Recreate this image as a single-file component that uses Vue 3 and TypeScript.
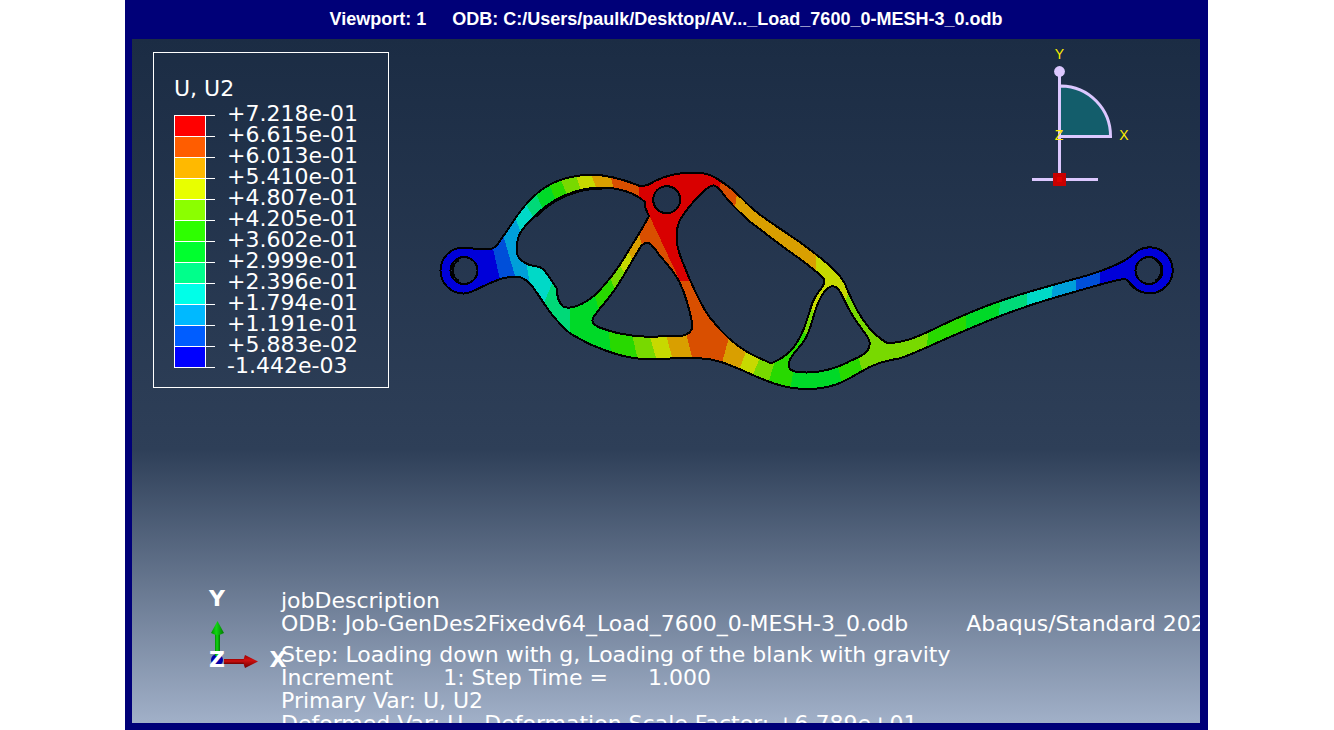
<script setup lang="ts">
interface Band { color: string; points: string }

const legendColors: string[] = [
  '#ff0000', '#ff5d00', '#ffb900', '#e8ff00', '#8bff00', '#2eff00',
  '#00ff2e', '#00ff8b', '#00ffe8', '#00b9ff', '#005dff', '#0000ff',
]

const legendValues: string[] = [
  '+7.218e-01', '+6.615e-01', '+6.013e-01', '+5.410e-01', '+4.807e-01',
  '+4.205e-01', '+3.602e-01', '+2.999e-01', '+2.396e-01', '+1.794e-01',
  '+1.191e-01', '+5.883e-02', '-1.442e-03',
]

function ring(cx: number, cy: number, r: number): string {
  return `M${cx - r} ${cy}a${r} ${r} 0 1 0 ${2 * r} 0a${r} ${r} 0 1 0 ${-2 * r} 0Z`
}

const body = `M463.500 247.500C474 247.500 480 251.500 492 248.500C499 246 500 239 507 231
  C527 198 548 175 592 174.800C610 174.800 625 180 640 186C647 186 650 184 655 181
  C665 176 680 172.500 693 172.500C708 172.500 715 177 722 182C735 190 740 197 750 206.500
  C765 220 780 228 800 242.300C812 251 822 259 829 265C838 273 843 280 845 284
  C848 292 850 296 857 310C864 322 872 334 887 343C905 343 920 336 940 326
  C990 302 1020 294 1077 278.300C1100 272 1122 264 1133 254.500A23 23 0 1 1 1135 288
  C1131 285 1129 279 1124 279C1110 281 1085 289 1050 299C1010 311 985 322 947 338.300
  C930 346 915 353 900 358.300C885 361 875 363 860 372.300C845 381 833 389 807 389
  C780 389 760 378 740 369.300C725 363 715 359 700 358.300C680 357.500 670 358.300 653 359.500
  C630 359 615 355 590 344.300C580 339 572 335 569 332.500C555 320 548 310 543 302
  C535 290 530 281 521 277.500C505 275 495 281 480 287.700C473 291 470 293.500 463.500 293.500
  A23 23 0 0 1 463.500 247.500Z`

const voids: string[] = [
  `M518 238C516 247 516 254 519 258C525 265 533 266 540 267C547 271 549 278 556.500 288
   C557 297 559 303 563 306.500C570 310 583 305 595 295C607 283 618 269 627 253.300
   C633 243 640 233 649 216C648 213 644 209 645 202C635 193 620 188 602 187.500
   C575 187.500 550 200 535 216C525 225 520 232 518 238Z`,
  `M647.500 242.700C642 242.700 640 248 636.700 253.300C628 268 620 283 612 293.500
   C605 303 599 309 593.500 317C591 322 593 324 598 327C612 332 625 336 647 336.700
   C660 336.700 672 336.200 683 335.500C690 334 693 330 692.300 323.300C690 312 687 298 680 283.300
   C677 276 668 265 661 257C655 250 652 243 647.500 242.700Z`,
  `M713.500 185.300C708 186 704 191 700 195C693 202 688 207 682 216.700C676 225 675 240 679 252
   C681 259 686 270 690 280C698 297 703 310 712 320C722 333 732 343 747 351.700
   C756 357 764 360 771 363.300C779 360 785 357 791 350.500C799 342 803 332 807 320
   C811 307 813 298 819 291.500C822 287 826 284 824 279C820 274 812 268 800 259
   C780 245 765 233 750 221.700C738 211 735 208 728 200C722 193 719 186 713.500 185.300Z`,
  `M833 286C825 287 819 300 816 308.300C812 320 811 330 804 341C799 349 792 353 789.500 361
   C787 368 791 371 797 372C815 374 830 371 847 362.700C855 358 863 357 868 350
   C872 342 868 337 864 332C858 324 850 312 845 301.700C841 294 839 287 833 286Z`,
  ring(464, 270.5, 13.5),
  ring(666.7, 199.7, 13.5),
  ring(1149, 270.5, 13.5),
]

const outline = [body, ...voids].join(' ')

const bands: Band[] = [
  { color: '#0000d9', points: '436,240 491,240 501,284 436,300' },
  { color: '#004fd9', points: '491,240 502,231 517,283 501,284' },
  { color: '#009fd9', points: '502,231 513,212 523,238 523,262 526,262 530,284 517,283' },
  { color: '#00d9c7', points: '513,212 523,238 535,220 524,201' },
  { color: '#00d978', points: '524,201 535,220 545,213 534,190' },
  { color: '#00d928', points: '534,190 545,213 558,204 547,181' },
  { color: '#28d900', points: '547,181 558,204 569,199 559,176' },
  { color: '#78d900', points: '559,176 569,199 583,196 574,170' },
  { color: '#c7d900', points: '574,170 583,196 599,196 589,168' },
  { color: '#d99f00', points: '589,168 599,196 616,196 608,168' },
  { color: '#d94f00', points: '608,168 616,196 640,202 637,170' },
  { color: '#00d9c7', points: '526,262 530,284 542,308 555,276 545,262' },
  { color: '#00d978', points: '555,276 542,308 560,335 570,338 570,300 560,285' },
  { color: '#00d928', points: '570,300 570,338 612,362 608,325 601,318 594,292' },
  { color: '#78d900', points: '607,272 618,295 629,280 617,261' },
  { color: '#c7d900', points: '617,261 629,280 634,265 626,245' },
  { color: '#d99f00', points: '626,245 634,265 643,248 638,231' },
  { color: '#78d900', points: '631,330 639,365 658,365 648,330' },
  { color: '#c7d900', points: '648,330 658,365 674,365 665,330' },
  { color: '#d99f00', points: '665,330 674,365 694,365 685,329' },
  { color: '#d94f00', points: '638,231 643,248 655,260 670,290 685,329 694,365 721,366 730,334 715,310 700,280 680,280 649,215 645,215' },
  { color: '#d99f00', points: '730,334 721,366 737,375 748,347' },
  { color: '#c7d900', points: '748,347 737,375 750,382 761,355' },
  { color: '#78d900', points: '761,355 750,382 767,388 776,357' },
  { color: '#d90000', points: '637,170 638,182 640,202 649,215 680,281 695,281 678,225 700,200 718,195 723,173 690,165' },
  { color: '#d94f00', points: '723,173 718,195 734,213 738,188' },
  { color: '#d99f00', points: '738,188 734,213 816,280 816,248' },
  { color: '#c7d900', points: '816,248 816,290 807,300 818,320 833,292 845,303 849,291 860,280' },
  { color: '#78d900', points: '807,300 818,320 811,340 797,325' },
  { color: '#78d900', points: '849,291 845,303 850,330 856,350 865,379 926,353 929,327 880,320' },
  { color: '#00d928', points: '794,366 790,392 844,392 837,363' },
  { color: '#00d928', points: '966,306 966,335 999,322 1000,295' },
  { color: '#00d978', points: '1000,295 999,322 1026,312 1028,286' },
  { color: '#00d9c7', points: '1028,286 1026,312 1050,306 1054,279' },
  { color: '#009fd9', points: '1054,279 1050,306 1075,297 1077,272' },
  { color: '#004fd9', points: '1077,272 1075,297 1099,289 1101,265' },
  { color: '#0000d9', points: '1101,265 1099,289 1130,300 1180,300 1180,240 1120,240' },
]
</script>

<template>
  <main class="page">
    <section class="window" aria-label="Viewport 1">
      <h1 class="title">
        <span>Viewport: 1</span>
        <span>ODB: C:/Users/paulk/Desktop/AV..._Load_7600_0-MESH-3_0.odb</span>
      </h1>
      <div class="canvas">
        <svg class="model" viewBox="436 160 744 240" role="img" aria-label="Displacement contour plot">
          <defs>
            <clipPath id="part-clip">
              <path :d="outline" clip-rule="evenodd" />
            </clipPath>
          </defs>
          <g clip-path="url(#part-clip)" shape-rendering="crispEdges">
            <rect x="436" y="160" width="744" height="240" fill="#28d900" />
            <polygon v-for="(band, i) in bands" :key="i" :points="band.points" :fill="band.color" />
          </g>
          <path class="edge" :d="outline" />
          <path class="edge" d="M459 281A12 12 0 0 1 459 260M1154 259A12.500 12.500 0 0 1 1155 281M1128 281Q1134 290 1142 292M602 188.500C575 188.500 550 201 536 217" />
        </svg>

        <aside class="legend">
          <h2 class="legend-title">U, U2</h2>
          <div class="legend-body">
            <div class="scale">
              <div v-for="color in legendColors" :key="color" class="scale-row">
                <span class="swatch" :style="{ background: color }"></span>
                <span class="tick"></span>
              </div>
            </div>
            <ul class="values">
              <li v-for="value in legendValues" :key="value">{{ value }}</li>
            </ul>
          </div>
        </aside>

        <svg class="compass" viewBox="1024 44 112 150" width="112" height="150" role="img" aria-label="View compass">
          <path d="M1060 86A50 50 0 0 1 1110 136H1060Z" fill="#135d6b" />
          <path d="M1059.500 72V180M1032 179.500H1098M1061 86A50 50 0 0 1 1110.500 136.500H1061" fill="none" stroke="#dcc8ff" stroke-width="3" />
          <circle cx="1059.500" cy="71.500" r="5.400" fill="#dcc8ff" />
          <rect x="1053" y="173" width="13" height="13" fill="#c80000" />
          <rect x="1057" y="177" width="5" height="5" fill="#e00000" />
          <g class="compass-label">
            <text x="1059.500" y="59">Y</text>
            <text x="1059" y="140">Z</text>
            <text x="1124" y="140">X</text>
          </g>
        </svg>

        <svg class="triad" viewBox="202 580 90 94" width="90" height="94" role="img" aria-label="Coordinate triad">
          <defs>
            <linearGradient id="triad-green">
              <stop offset="0" stop-color="#008c00" />
              <stop offset="0.4" stop-color="#12d812" />
              <stop offset="1" stop-color="#007800" />
            </linearGradient>
            <linearGradient id="triad-red" x2="0" y2="1">
              <stop offset="0" stop-color="#a00000" />
              <stop offset="0.4" stop-color="#d01010" />
              <stop offset="1" stop-color="#700000" />
            </linearGradient>
          </defs>
          <circle cx="217" cy="660" r="6" fill="#0000a8" />
          <rect x="215" y="634" width="5" height="22" fill="url(#triad-green)" />
          <path d="M217.500 621L224 633Q217.500 637 211 633Z" fill="url(#triad-green)" />
          <rect x="224" y="659" width="21" height="5" fill="url(#triad-red)" />
          <path d="M258 661.500L245 655Q242 661.500 245 668Z" fill="url(#triad-red)" />
          <g class="triad-label">
            <text x="217" y="606">Y</text>
            <text x="217" y="667">Z</text>
            <text x="278" y="667">X</text>
          </g>
        </svg>

        <div class="state">
          <p>jobDescription</p>
          <p>ODB: Job-GenDes2Fixedv64_Load_7600_0-MESH-3_0.odb<span class="column solver">Abaqus/Standard 202</span></p>
          <p class="step">Step: Loading down with g, Loading of the blank with gravity</p>
          <p>Increment<span class="column count">1: Step Time =</span><span class="column">1.000</span></p>
          <p>Primary Var: U, U2</p>
          <p>Deformed Var: U&nbsp;&nbsp; Deformation Scale Factor: +6.789e+01</p>
        </div>
      </div>
    </section>
  </main>
</template>

<style>
body {
  margin: 0;
  background: #fff;
}
</style>

<style scoped>
.page {
  box-sizing: border-box;
  height: 100vh;
  padding: 0 126px 0 125px;
  overflow: hidden;
}
.window {
  box-sizing: border-box;
  display: flex;
  flex-direction: column;
  height: 100%;
  padding: 0 8px 7px 7px;
  background: #000078;
  color: #fff;
}
.title {
  display: flex;
  flex: none;
  justify-content: center;
  gap: 26px;
  margin: 0;
  font: bold 18px/39px "Liberation Sans", Arial, sans-serif;
  white-space: nowrap;
}
.canvas {
  position: relative;
  flex: 1;
  min-height: 0;
  overflow: hidden;
  background: linear-gradient(#1b2c44 0%, #2e3f58 60%, #a1b0c8 100%);
  font: 22px/23px "DejaVu Sans", Verdana, sans-serif;
}
.model {
  position: absolute;
  left: 304px;
  top: 121px;
  width: calc(100% - 324px);
}
.edge {
  fill: none;
  stroke: #000;
  stroke-width: 2;
  shape-rendering: crispEdges;
}
.legend {
  position: absolute;
  left: 21px;
  top: 13px;
  box-sizing: border-box;
  width: 236px;
  padding: 24px 20px 11px;
  border: 1px solid #fff;
}
.legend-title {
  margin: 0;
  font-size: 22px;
  font-weight: normal;
  line-height: 23px;
}
.legend-body {
  display: flex;
  gap: 12px;
  margin-top: 3px;
}
.scale {
  margin-top: 12px;
}
.scale-row {
  display: flex;
  height: 21px;
}
.swatch {
  box-sizing: border-box;
  width: 32px;
  border: 1px solid #fff;
  border-bottom: 0;
}
.tick {
  box-sizing: border-box;
  width: 9px;
  border-top: 1px solid #fff;
}
.scale-row:last-child {
  height: 22px;
}
.scale-row:last-child .swatch,
.scale-row:last-child .tick {
  border-bottom: 1px solid #fff;
}
.values {
  margin: 0;
  padding: 0;
  list-style: none;
  line-height: 21px;
  white-space: nowrap;
}
.compass {
  position: absolute;
  right: 64px;
  top: 5px;
}
.compass-label {
  fill: #ffee00;
  font: 14px "Liberation Sans", Arial, sans-serif;
  text-anchor: middle;
}
.triad {
  position: absolute;
  left: 70px;
  top: 541px;
}
.triad-label {
  fill: #fff;
  font: bold 22px "DejaVu Sans", Verdana, sans-serif;
  text-anchor: middle;
}
.state {
  position: absolute;
  left: 149px;
  top: 550px;
  white-space: nowrap;
}
.state p {
  margin: 0;
}
.state .step {
  margin-top: 8px;
}
.column {
  margin-left: 40px;
}
.column.count {
  margin-left: 50px;
}
.column.solver {
  margin-left: 58px;
}
</style>
